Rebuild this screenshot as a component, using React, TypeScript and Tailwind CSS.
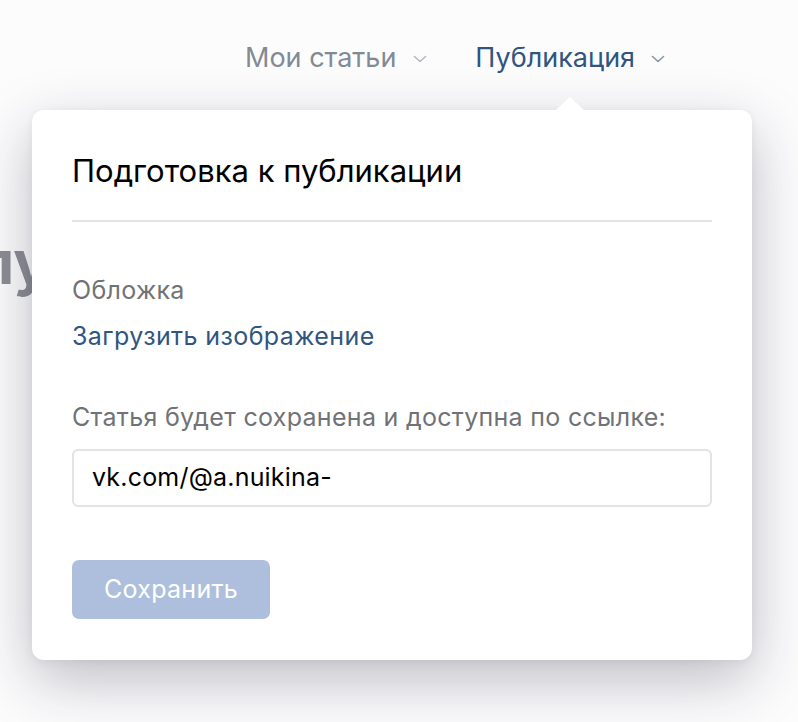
import React from "react";

function Chevron({ className }: { className?: string }) {
  return (
    <svg width="14" height="8" viewBox="0 0 14 8" className={className} fill="none">
      <path d="M1.5 1.5 L7 6.5 L12.5 1.5" stroke="currentColor" strokeWidth="1.6" strokeLinecap="round" strokeLinejoin="round" />
    </svg>
  );
}

export default function App() {
  return (
    <div className="relative w-[798px] h-[722px] overflow-hidden bg-[#fcfcfd] font-['Inter',sans-serif]">
      <div className="absolute left-[-22px] top-[232px] text-[60px] font-bold leading-none text-[#8c8d95] blur-[0.5px]">
        лу
      </div>
      <div className="relative flex flex-col">
        <div className="flex h-[97px] items-start pt-[42px] pl-[245px]">
          <div className="flex items-center text-[27px] leading-[32px] text-[#828a94]">
            <span>Мои статьи</span>
            <Chevron className="ml-[17px] mt-[2px] text-[#b3b9c1]" />
          </div>
          <div className="ml-[48px] flex items-center text-[27px] leading-[32px] text-[#2f5580]">
            <span>Публикация</span>
            <Chevron className="ml-[16px] mt-[2px] text-[#8b96a3]" />
          </div>
        </div>
        <div className="relative ml-[32px] mt-[13px] h-[550px] w-[720px] rounded-[12px] bg-white shadow-[0_20px_60px_rgba(30,30,50,0.28),0_2px_10px_rgba(0,0,0,0.06)]">
          <div className="absolute left-[524px] top-[-13px] h-0 w-0 border-x-[14px] border-b-[13px] border-x-transparent border-b-white" />
          <div className="flex flex-col px-[40px]">
            <div className="pt-[43px] text-[31px] leading-[36px] text-black">Подготовка к публикации</div>
            <div className="mt-[31px] h-[2px] bg-[#e2e4e7]" />
            <div className="mt-[54px] text-[25px] leading-[28px] tracking-[0.3px] text-[#6f7276]">Обложка</div>
            <div className="mt-[18px] text-[25px] leading-[28px] tracking-[0.4px] text-[#2f5580]">Загрузить изображение</div>
            <div className="mt-[53px] text-[25px] leading-[28px] tracking-[0.3px] text-[#6f7276]">Статья будет сохранена и доступна по ссылке:</div>
            <div className="mt-[18px] flex h-[58px] items-center rounded-[6px] border-2 border-[#e1e3e6] pl-[18px] text-[25px] tracking-[0.2px] text-black">
              vk.com/@a.nuikina-
            </div>
            <div className="mt-[53px] flex h-[59px] w-[198px] items-center justify-center rounded-[7px] bg-[#adbfdc] text-[25px] tracking-[0.3px] text-white">
              Сохранить
            </div>
          </div>
        </div>
      </div>
    </div>
  );
}
